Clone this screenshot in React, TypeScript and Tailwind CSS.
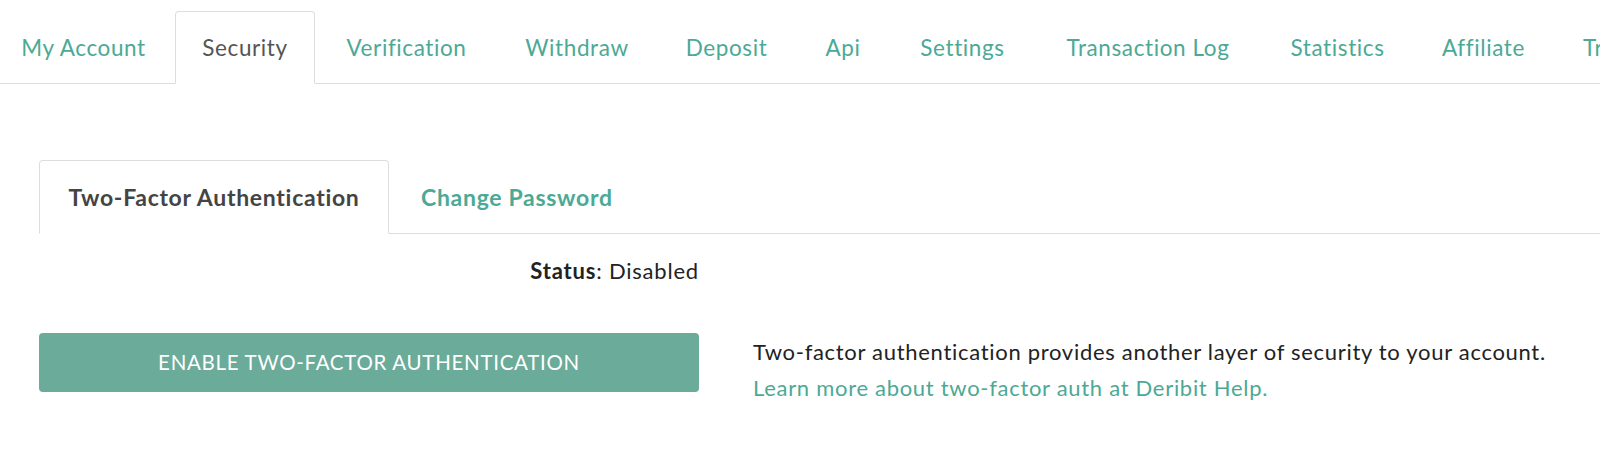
const tabs: [string, string][] = [
  ["My Account", "w-[179px] justify-center"],
  ["Security", "w-[140px] justify-center"],
  ["Verification", "w-[179px] justify-center"],
  ["Withdraw", "w-[158px] justify-center"],
  ["Deposit", "w-[137px] justify-center"],
  ["Api", "w-[92px] justify-center"],
  ["Settings", "w-[143px] justify-center"],
  ["Transaction Log", "w-[224px] justify-center"],
  ["Statistics", "w-[151px] justify-center"],
  ["Affiliate", "w-[137px] justify-center"],
  ["Trading", "px-[28px]"],
];

export default function App() {
  return (
    <div className="w-[1600px] h-[471px] overflow-hidden bg-white font-['Lato',sans-serif]">
      {/* main tabs */}
      <nav className="flex items-end h-[84px] border-b border-[#dddddd] -ml-[6px] pt-[11px] whitespace-nowrap">
        {tabs.map(([t, w]) => {
          const active = t === "Security";
          return (
            <div
              key={t}
              className={
                (active
                  ? "border-[#dddddd] border-b-white rounded-t-[4px] bg-white text-[#555555] "
                  : "border-transparent text-[#4ca995] ") +
                w +
                " shrink-0 h-[73px] -mb-px mr-[2px] flex items-center border text-[22.5px] tracking-[0.6px]"
              }
            >
              {t}
            </div>
          );
        })}
      </nav>

      <div className="px-[39px] pt-[76px]">
        {/* sub tabs */}
        <div className="flex items-end h-[74px] border-b border-[#dddddd] -mr-[39px]">
          <div className="w-[350px] h-[74px] -mb-px flex items-center justify-center border border-[#dddddd] border-b-white rounded-t-[4px] bg-white text-[23px] tracking-[0.7px] font-bold text-[#444444]">
            Two-Factor Authentication
          </div>
          <div className="h-[74px] -mb-px ml-[2px] px-[30px] flex items-center text-[23px] tracking-[0.7px] font-bold text-[#4ca995]">
            Change Password
          </div>
        </div>

        <div className="flex">
          <div className="w-[660px] flex flex-col">
            <div className="h-[72px] pt-[20px] text-right text-[22px] tracking-[0.8px] text-[#222222]">
              <span className="font-bold">Status</span>: Disabled
            </div>
            <button className="mt-[27px] h-[59px] w-full rounded-[4px] bg-[#6aab99] text-white text-[20.5px] tracking-[0.7px] uppercase">
              Enable two-factor authentication
            </button>
          </div>
          <div className="ml-[54px] pt-[100px] text-[22px] tracking-[0.7px] leading-[36px]">
            <p className="text-[#222222]">
              Two-factor authentication provides another layer of security to your account.
            </p>
            <a className="text-[#4ca995]">Learn more about two-factor auth at Deribit Help.</a>
          </div>
        </div>
      </div>
    </div>
  );
}
